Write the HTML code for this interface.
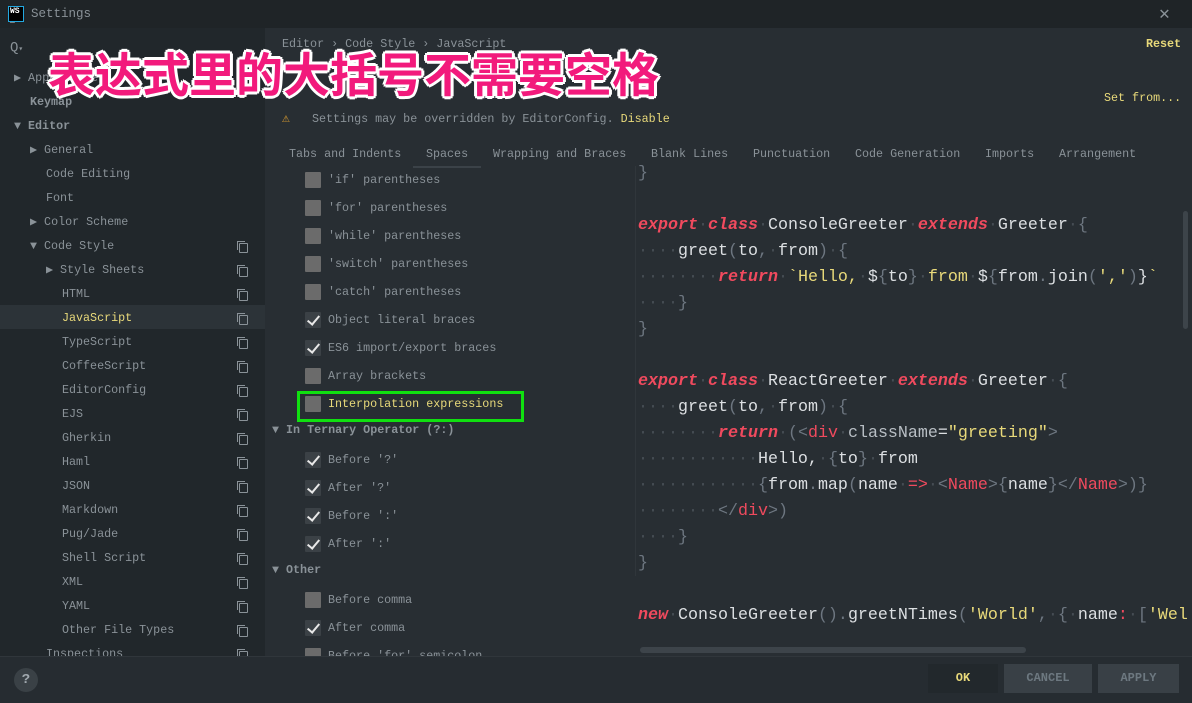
<!DOCTYPE html><html><head><meta charset="utf-8"><style>
*{margin:0;padding:0;box-sizing:border-box}
body{width:1192px;height:703px;background:#282e33;position:relative;overflow:hidden;font-family:"Liberation Mono",monospace;font-size:11.7px;color:#8a9298}
.a{position:absolute;white-space:pre}
.side{position:absolute;left:0;top:28px;width:265px;height:628px;background:#21272b}
.tb{position:absolute;left:0;top:0;width:1192px;height:28px;background:#1f2427}
.si{position:absolute;height:24px;line-height:26px;white-space:pre}
.cp{position:absolute;left:239px;width:9px;height:10px;border:1px solid #8a9298;border-radius:1px}
.cp:after{content:"";position:absolute;left:-3px;top:-3px;width:7px;height:8px;border-left:1px solid #8a9298;border-top:1px solid #8a9298}
.cb{position:absolute;left:305px;width:16px;height:16px;background:#6b6b6b;border-radius:1px}
.ck{background:#3b4146}
.ck:after{content:"";position:absolute;left:5px;top:1px;width:5px;height:10px;border:solid #e8e8e8;border-width:0 2px 2px 0;transform:rotate(40deg)}
.ol{position:absolute;left:328px;line-height:16px;white-space:pre}
.code{position:absolute;left:638px;font-size:16.67px;line-height:26px;color:#dcdfe2;white-space:pre}
.k{color:#f04a5e;font-style:italic;font-weight:bold}
.s{color:#e8d97a}
.p{color:#6d7680}
.d{color:#464d54}
.t{color:#f04a5e}
.btn{position:absolute;top:664px;height:29px;line-height:29px;text-align:center;font-weight:bold;font-size:12px}
.tab{position:absolute;top:147px}
</style></head><body>
<div class="tb"></div>
<div class="a" style="left:8px;top:6px;width:16px;height:16px;background:#000;border:1px solid #23a8e0;color:#fff;font-size:8px;font-weight:bold;line-height:9px;padding-left:1px">WS<br>_</div>
<div class="a" style="left:31px;top:7px;font-size:12.5px;color:#8a9298">Settings</div>
<div class="a" style="left:1159px;top:3px;font-size:18px;color:#8a9298">✕</div>
<div class="side"></div>
<div class="a" style="left:10px;top:40px;font-size:14px">Q<span style="font-size:8px">▾</span></div>
<div class="si" style="left:0;top:305px;width:265px;background:#2c3338"></div>
<div class="si" style="left:14px;top:65px">▶ Appearance</div>
<div class="si" style="left:30px;top:89px;font-weight:bold">Keymap</div>
<div class="si" style="left:14px;top:113px;font-weight:bold">▼ Editor</div>
<div class="si" style="left:30px;top:137px">▶ General</div>
<div class="si" style="left:46px;top:161px">Code Editing</div>
<div class="si" style="left:46px;top:185px">Font</div>
<div class="si" style="left:30px;top:209px">▶ Color Scheme</div>
<div class="si" style="left:30px;top:233px">▼ Code Style</div>
<div class="si" style="left:46px;top:257px">▶ Style Sheets</div>
<div class="si" style="left:62px;top:281px">HTML</div>
<div class="si" style="left:62px;top:305px;color:#e8d97a">JavaScript</div>
<div class="si" style="left:62px;top:329px">TypeScript</div>
<div class="si" style="left:62px;top:353px">CoffeeScript</div>
<div class="si" style="left:62px;top:377px">EditorConfig</div>
<div class="si" style="left:62px;top:401px">EJS</div>
<div class="si" style="left:62px;top:425px">Gherkin</div>
<div class="si" style="left:62px;top:449px">Haml</div>
<div class="si" style="left:62px;top:473px">JSON</div>
<div class="si" style="left:62px;top:497px">Markdown</div>
<div class="si" style="left:62px;top:521px">Pug/Jade</div>
<div class="si" style="left:62px;top:545px">Shell Script</div>
<div class="si" style="left:62px;top:569px">XML</div>
<div class="si" style="left:62px;top:593px">YAML</div>
<div class="si" style="left:62px;top:617px">Other File Types</div>
<div class="si" style="left:46px;top:641px">Inspections</div>
<div class="cp" style="top:243px"></div><div class="cp" style="top:267px"></div><div class="cp" style="top:291px"></div><div class="cp" style="top:315px"></div><div class="cp" style="top:339px"></div><div class="cp" style="top:363px"></div><div class="cp" style="top:387px"></div><div class="cp" style="top:411px"></div><div class="cp" style="top:435px"></div><div class="cp" style="top:459px"></div><div class="cp" style="top:483px"></div><div class="cp" style="top:507px"></div><div class="cp" style="top:531px"></div><div class="cp" style="top:555px"></div><div class="cp" style="top:579px"></div><div class="cp" style="top:603px"></div><div class="cp" style="top:627px"></div><div class="cp" style="top:651px"></div>
<div class="a" style="left:282px;top:37px">Editor › Code Style › JavaScript</div>
<div class="a" style="left:1146px;top:37px;color:#e8d97a;font-weight:bold">Reset</div>
<div class="a" style="left:1104px;top:91px;color:#e8d97a">Set from...</div>
<div class="a" style="left:282px;top:111px;color:#e0a030;font-size:13px">⚠</div>
<div class="a" style="left:312px;top:112px">Settings may be overridden by EditorConfig. <span style="color:#e8d97a">Disable</span></div>
<div class="tab" style="left:289px">Tabs and Indents</div>
<div class="tab" style="left:426px">Spaces</div>
<div class="tab" style="left:493px">Wrapping and Braces</div>
<div class="tab" style="left:651px">Blank Lines</div>
<div class="tab" style="left:753px">Punctuation</div>
<div class="tab" style="left:855px">Code Generation</div>
<div class="tab" style="left:985px">Imports</div>
<div class="tab" style="left:1059px">Arrangement</div>
<div class="a" style="left:413px;top:166px;width:68px;height:2px;background:#3b4248"></div>
<div class="a" style="left:635px;top:166px;width:1px;height:410px;background:#30363b"></div>
<div class="cb" style="top:172px"></div><div class="ol" style="top:172px">'if' parentheses</div>
<div class="cb" style="top:200px"></div><div class="ol" style="top:200px">'for' parentheses</div>
<div class="cb" style="top:228px"></div><div class="ol" style="top:228px">'while' parentheses</div>
<div class="cb" style="top:256px"></div><div class="ol" style="top:256px">'switch' parentheses</div>
<div class="cb" style="top:284px"></div><div class="ol" style="top:284px">'catch' parentheses</div>
<div class="cb ck" style="top:312px"></div><div class="ol" style="top:312px">Object literal braces</div>
<div class="cb ck" style="top:340px"></div><div class="ol" style="top:340px">ES6 import/export braces</div>
<div class="cb" style="top:368px"></div><div class="ol" style="top:368px">Array brackets</div>
<div class="cb" style="top:396px"></div><div class="ol" style="top:396px;color:#e8d97a">Interpolation expressions</div>
<div class="a" style="left:297px;top:391px;width:227px;height:31px;border:3px solid #10e010"></div>
<div class="a" style="left:272px;top:423px;font-weight:bold">▼ In Ternary Operator (?:)</div>
<div class="cb ck" style="top:452px"></div><div class="ol" style="top:452px">Before '?'</div>
<div class="cb ck" style="top:480px"></div><div class="ol" style="top:480px">After '?'</div>
<div class="cb ck" style="top:508px"></div><div class="ol" style="top:508px">Before ':'</div>
<div class="cb ck" style="top:536px"></div><div class="ol" style="top:536px">After ':'</div>
<div class="a" style="left:272px;top:563px;font-weight:bold">▼ Other</div>
<div class="cb" style="top:592px"></div><div class="ol" style="top:592px">Before comma</div>
<div class="cb ck" style="top:620px"></div><div class="ol" style="top:620px">After comma</div>
<div class="cb" style="top:648px"></div><div class="ol" style="top:648px">Before 'for' semicolon</div>
<div class="code" style="top:161px"><span class="p">}</span>

<span class="k">export</span><span class="d">·</span><span class="k">class</span><span class="d">·</span>ConsoleGreeter<span class="d">·</span><span class="k">extends</span><span class="d">·</span>Greeter<span class="d">·</span><span class="p">{</span>
<span class="d">····</span>greet<span class="p">(</span>to<span class="p">,</span><span class="d">·</span>from<span class="p">)</span><span class="d">·</span><span class="p">{</span>
<span class="d">········</span><span class="k">return</span><span class="d">·</span><span class="s">`Hello,</span><span class="d">·</span>$<span class="p">{</span>to<span class="p">}</span><span class="d">·</span><span class="s">from</span><span class="d">·</span>$<span class="p">{</span>from<span class="p">.</span>join<span class="p">(</span><span class="s">','</span><span class="p">)</span>}<span class="s">`</span>
<span class="d">····</span><span class="p">}</span>
<span class="p">}</span>

<span class="k">export</span><span class="d">·</span><span class="k">class</span><span class="d">·</span>ReactGreeter<span class="d">·</span><span class="k">extends</span><span class="d">·</span>Greeter<span class="d">·</span><span class="p">{</span>
<span class="d">····</span>greet<span class="p">(</span>to<span class="p">,</span><span class="d">·</span>from<span class="p">)</span><span class="d">·</span><span class="p">{</span>
<span class="d">········</span><span class="k">return</span><span class="d">·</span><span class="p">(&lt;</span><span class="t">div</span><span class="d">·</span><span style="color:#b8bec4">className</span>=<span class="s">"greeting"</span><span class="p">&gt;</span>
<span class="d">············</span>Hello,<span class="d">·</span><span class="p">{</span>to<span class="p">}</span><span class="d">·</span>from
<span class="d">············</span><span class="p">{</span>from<span class="p">.</span>map<span class="p">(</span>name<span class="d">·</span><span class="t">=&gt;</span><span class="d">·</span><span class="p">&lt;</span><span class="t">Name</span><span class="p">&gt;{</span>name<span class="p">}&lt;/</span><span class="t">Name</span><span class="p">&gt;)}</span>
<span class="d">········</span><span class="p">&lt;/</span><span class="t">div</span><span class="p">&gt;)</span>
<span class="d">····</span><span class="p">}</span>
<span class="p">}</span>

<span class="k">new</span><span class="d">·</span>ConsoleGreeter<span class="p">().</span>greetNTimes<span class="p">(</span><span class="s">'World'</span><span class="p">,</span><span class="d">·</span><span class="p">{</span><span class="d">·</span>name<span class="t">:</span><span class="d">·</span><span class="p">[</span><span class="s">'Wel</span></div>
<div class="a" style="left:1183px;top:211px;width:5px;height:118px;background:#3d444a;border-radius:3px"></div>
<div class="a" style="left:640px;top:647px;width:386px;height:6px;background:#3d444a;border-radius:3px"></div>
<div class="a" style="left:0;top:656px;width:1192px;height:47px;background:#262c31;border-top:1px solid #30363b"></div>
<div class="a" style="left:14px;top:668px;width:24px;height:24px;border-radius:12px;background:#3a4146;color:#a0a8ae;font-size:14px;text-align:center;line-height:24px;font-weight:bold">?</div>
<div class="btn" style="left:928px;width:70px;background:#22282c;color:#e8d97a">OK</div>
<div class="btn" style="left:1004px;width:88px;background:#394046;color:#6d7880">CANCEL</div>
<div class="btn" style="left:1098px;width:81px;background:#394046;color:#6d7880">APPLY</div>
<div class="a" style="left:48px;top:48px;font-family:'Liberation Sans','Noto Sans CJK SC',sans-serif;font-size:47px;line-height:56px;font-weight:bold;color:#f21a7c;text-shadow:2px 2px 0 #fff,-2px -2px 0 #fff,2px -2px 0 #fff,-2px 2px 0 #fff,0 3px 0 #fff,0 -3px 0 #fff,3px 0 0 #fff,-3px 0 0 #fff">表达式里的大括号不需要空格</div>
</body></html>
